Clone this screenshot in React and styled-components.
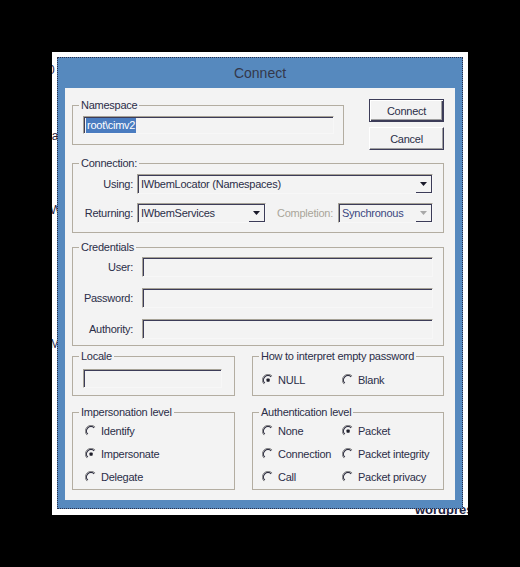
import React from 'react';
import styled, { createGlobalStyle } from 'styled-components';

const Global = createGlobalStyle`
  html, body { margin: 0; padding: 0; background: #000; }
  body { font-family: "Liberation Sans", Arial, sans-serif; }
  #root { width: 520px; height: 567px; }
  * { box-sizing: border-box; }
`;

const TEXT = '#2b2e48';
const DARK = '#3c3c58';
const GROUP = '#b3ada1';
const BG = '#f3f3f3';
const HILITE = '#f7f7f7';

const Stage = styled.div`
  width: 520px;
  height: 567px;
  background: #000;
  padding: 52px;
`;

const BackWindow = styled.div`
  position: relative;
  width: 416px;
  height: 463px;
  padding: 5px;
  background: #fff;
  overflow: hidden;
`;

const Fragment = styled.span`
  position: absolute;
  font-size: ${(p) => p.$size || 12}px;
  font-weight: ${(p) => (p.$bold ? 700 : 400)};
  line-height: 13px;
  color: #1e2240;
  white-space: nowrap;
`;

const Dialog = styled.div`
  position: relative;
  z-index: 1;
  width: 406px;
  height: 452px;
  background: #5689be;
  border: 1px dotted #2a2f4a;
  display: flex;
  flex-direction: column;
`;

const TitleBar = styled.div`
  height: 30px;
  display: flex;
  align-items: center;
  justify-content: center;
  font-size: 14px;
  color: #34384a;
`;

const Content = styled.div`
  flex: 1;
  margin: 0 7px 8px;
  background: ${BG};
  padding: 11px 11px 0 7px;
  display: flex;
  flex-direction: column;
  font-size: 11px;
  letter-spacing: -0.25px;
  color: ${TEXT};
`;

const Row = styled.div`
  display: flex;
  align-items: flex-start;
  gap: ${(p) => p.$gap || 0}px;
  margin-top: ${(p) => p.$mt || 0}px;
`;

const Fieldset = styled.fieldset`
  margin: ${(p) => p.$mt || 0}px 0 0 0;
  width: ${(p) => (p.$w ? `${p.$w}px` : 'auto')};
  height: ${(p) => p.$h}px;
  border: 1px solid ${GROUP};
  padding: ${(p) => p.$pt}px 0 0 ${(p) => p.$pl}px;
  min-width: 0;
`;

const Legend = styled.legend`
  margin-left: ${(p) => 6 - p.$pl}px;
  padding: 0 2px;
  font-size: 11px;
  line-height: 13px;
  color: ${TEXT};
`;

const Group = ({ title, w, h, mt, pt, pl, children }) => (
  <Fieldset $w={w} $h={h} $mt={mt} $pt={pt} $pl={pl}>
    <Legend $pl={pl}>{title}</Legend>
    {children}
  </Fieldset>
);

const Sunken = styled.div`
  width: ${(p) => p.$w}px;
  height: ${(p) => p.$h || 20}px;
  border: 1px solid;
  border-color: #a6a296 ${HILITE} ${HILITE} #a6a296;
  box-shadow: inset 1px 1px 0 ${DARK};
  display: flex;
  align-items: center;
  padding-left: 2px;
`;

const Selected = styled.span`
  background: #4a7cc0;
  color: #fff;
  padding: 1px;
  line-height: 13px;
`;

const ButtonCol = styled.div`
  display: flex;
  flex-direction: column;
  gap: 5px;
  margin-left: 25px;
`;

const Button = styled.div`
  width: 75px;
  height: 23px;
  display: flex;
  align-items: center;
  justify-content: center;
  color: ${TEXT};
  border: 1px solid;
  border-color: ${(p) => (p.$default ? `${DARK}` : `#fff ${DARK} ${DARK} #fff`)};
  box-shadow: ${(p) =>
    p.$default
      ? `inset 1px 1px 0 #fff, inset -1px -1px 0 ${DARK}, inset -2px -2px 0 #a0a0a0`
      : `inset -1px -1px 0 #a0a0a0`};
`;

const FormGrid = styled.div`
  display: grid;
  grid-template-columns: ${(p) => p.$label}px auto;
  column-gap: ${(p) => p.$cgap}px;
  row-gap: ${(p) => p.$rgap}px;
  align-items: center;
`;

const Label = styled.span`
  text-align: right;
  white-space: nowrap;
  color: ${(p) => (p.$disabled ? '#a9a599' : TEXT)};
  margin: ${(p) => p.$m || 0};
`;

const ComboBox = styled.div`
  width: ${(p) => p.$w}px;
  height: 20px;
  border: 1px solid;
  border-color: #a6a296 ${HILITE} ${HILITE} #a6a296;
  box-shadow: inset 1px 1px 0 ${DARK};
  display: flex;
  align-items: stretch;
  color: ${(p) => (p.$disabled ? '#3a4780' : TEXT)};
`;

const ComboText = styled.span`
  flex: 1;
  padding-left: 3px;
  display: flex;
  align-items: center;
  white-space: nowrap;
  overflow: hidden;
`;

const ComboButton = styled.span`
  width: 16px;
  flex-shrink: 0;
  margin-top: 1px;
  border-right: 1px solid ${DARK};
  border-bottom: 1px solid ${DARK};
  display: flex;
  align-items: center;
  justify-content: center;
`;

const InlineRow = styled.div`
  display: flex;
  align-items: center;
`;

const RadioGrid = styled.div`
  display: grid;
  grid-template-columns: repeat(${(p) => p.$cols}, 80px);
  row-gap: 7px;
`;

const RadioItem = styled.div`
  display: flex;
  align-items: center;
  gap: 4px;
  height: 16px;
  white-space: nowrap;
  svg { flex-shrink: 0; }
`;

const Arrow = ({ disabled }) => (
  <svg width="7" height="4" viewBox="0 0 7 4">
    <path d="M0 0H7L3.5 4Z" fill={disabled ? '#a8a8a8' : '#1a1a2a'} />
  </svg>
);

const Combo = ({ w, text, disabled }) => (
  <ComboBox $w={w} $disabled={disabled}>
    <ComboText>{text}</ComboText>
    <ComboButton>
      <Arrow disabled={disabled} />
    </ComboButton>
  </ComboBox>
);

const RadioIcon = ({ checked }) => (
  <svg width="12" height="12" viewBox="0 0 12 12">
    <path d="M1.9 10.1A5.8 5.8 0 0 1 10.1 1.9" fill="none" stroke="#8a8a8a" strokeWidth="1" />
    <path d="M2.8 9.2A4.5 4.5 0 0 1 9.2 2.8" fill="none" stroke="#2e2e40" strokeWidth="1.2" />
    {checked && <rect x="4.5" y="4.5" width="3.2" height="3.2" rx="0.8" fill="#1e1e2a" />}
  </svg>
);

const Radio = ({ label, checked }) => (
  <RadioItem>
    <RadioIcon checked={checked} />
    <span>{label}</span>
  </RadioItem>
);

export default function App() {
  return (
    <>
      <Global />
      <Stage>
        <BackWindow>
          <Fragment style={{ left: -4, top: 12 }}>0</Fragment>
          <Fragment style={{ left: -3, top: 78 }}>la</Fragment>
          <Fragment style={{ left: -2, top: 152 }}>W</Fragment>
          <Fragment style={{ left: -2, top: 286 }}>M</Fragment>
          <Fragment $bold $size={13} style={{ left: 363, top: 451 }}>wordpress</Fragment>
          <Dialog>
            <TitleBar>Connect</TitleBar>
            <Content>
              <Row>
                <Group title="Namespace" w={273} h={46} pt={4} pl={10}>
                  <Sunken $w={251} $h={18}>
                    <Selected>root\cimv2</Selected>
                  </Sunken>
                </Group>
                <ButtonCol>
                  <Button $default>Connect</Button>
                  <Button>Cancel</Button>
                </ButtonCol>
              </Row>

              <Group title="Connection:" mt={7} h={76} pt={4} pl={10}>
                <FormGrid $label={50} $cgap={4} $rgap={9}>
                  <Label>Using:</Label>
                  <Combo w={296} text="IWbemLocator (Namespaces)" />
                  <Label>Returning:</Label>
                  <InlineRow>
                    <Combo w={129} text="IWbemServices" />
                    <Label $disabled $m="0 5px 0 11px">Completion:</Label>
                    <Combo w={95} text="Synchronous" disabled />
                  </InlineRow>
                </FormGrid>
              </Group>

              <Group title="Credentials" mt={8} h={105} pt={3} pl={10}>
                <FormGrid $label={50} $cgap={9} $rgap={11}>
                  <Label>User:</Label>
                  <Sunken $w={291} />
                  <Label>Password:</Label>
                  <Sunken $w={291} />
                  <Label>Authority:</Label>
                  <Sunken $w={291} />
                </FormGrid>
              </Group>

              <Row $mt={4} $gap={17}>
                <Group title="Locale" w={163} h={46} pt={6} pl={10}>
                  <Sunken $w={139} $h={19} />
                </Group>
                <Group title="How to interpret empty password" w={192} h={46} pt={9} pl={9}>
                  <RadioGrid $cols={2}>
                    <Radio label="NULL" checked />
                    <Radio label="Blank" />
                  </RadioGrid>
                </Group>
              </Row>

              <Row $mt={10} $gap={17}>
                <Group title="Impersonation level" w={163} h={84} pt={4} pl={12}>
                  <RadioGrid $cols={1}>
                    <Radio label="Identify" />
                    <Radio label="Impersonate" checked />
                    <Radio label="Delegate" />
                  </RadioGrid>
                </Group>
                <Group title="Authentication level" w={192} h={84} pt={4} pl={9}>
                  <RadioGrid $cols={2}>
                    <Radio label="None" />
                    <Radio label="Packet" checked />
                    <Radio label="Connection" />
                    <Radio label="Packet integrity" />
                    <Radio label="Call" />
                    <Radio label="Packet privacy" />
                  </RadioGrid>
                </Group>
              </Row>
            </Content>
          </Dialog>
        </BackWindow>
      </Stage>
    </>
  );
}
